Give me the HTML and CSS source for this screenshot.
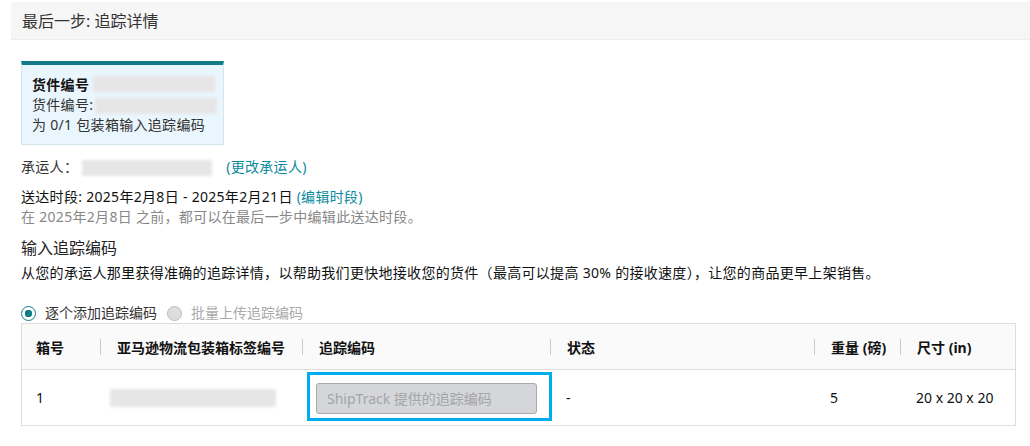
FILE: index.html
```html
<!DOCTYPE html>
<html lang="zh-CN">
<head>
    <meta charset="UTF-8">
    <meta name="viewport" content="width=device-width, initial-scale=1.0">
    <title>追踪详情</title>
    <link rel="stylesheet" href="styles.css">
</head>
<body>
    <div class="page">
        <div class="step-header">最后一步: 追踪详情</div>
        <div class="content">
            <div class="shipment-card">
                <div class="card-line"><b>货件编号</b> <span class="blur blur-card"></span></div>
                <div class="card-line">货件编号:<span class="blur blur-card2"></span></div>
                <div class="card-line">为 0/1 包装箱输入追踪编码</div>
            </div>

            <div class="info-line carrier">承运人：<span class="blur blur-carrier"></span><a href="javascript:;" class="link">(更改承运人)</a></div>
            <div class="info-line delivery">送达时段: 2025年2月8日 - 2025年2月21日 <a href="javascript:;" class="link">(编辑时段)</a></div>
            <div class="info-line muted">在 2025年2月8日 之前，都可以在最后一步中编辑此送达时段。</div>

            <h3 class="section-title">输入追踪编码</h3>
            <p class="desc">从您的承运人那里获得准确的追踪详情，以帮助我们更快地接收您的货件（最高可以提高 30% 的接收速度），让您的商品更早上架销售。</p>

            <div class="radio-group">
                <label class="radio"><span class="radio-dot checked"></span>逐个添加追踪编码</label>
                <label class="radio disabled"><span class="radio-dot"></span>批量上传追踪编码</label>
            </div>

            <div class="box-table">
                <div class="row head">
                    <div class="cell first">箱号</div>
                    <div class="cell"><span class="sep"></span>亚马逊物流包装箱标签编号</div>
                    <div class="cell"><span class="sep"></span>追踪编码</div>
                    <div class="cell"><span class="sep"></span>状态</div>
                    <div class="cell"><span class="sep"></span>重量 (磅)</div>
                    <div class="cell"><span class="sep"></span>尺寸 (in)</div>
                </div>
                <div class="row body">
                    <div class="cell first">1</div>
                    <div class="cell pad"><span class="blur blur-label"></span></div>
                    <div class="cell track">
                        <div class="highlight">
                            <input type="text" class="track-input" placeholder="ShipTrack 提供的追踪编码" disabled>
                        </div>
                    </div>
                    <div class="cell pad">-</div>
                    <div class="cell pad">5</div>
                    <div class="cell pad">20 x 20 x 20</div>
                </div>
            </div>
        </div>
    </div>
</body>
</html>
```

FILE: styles.css
```css
* {
    margin: 0;
    padding: 0;
    box-sizing: border-box;
}
body {
    font-family: "Noto Sans", "Noto Sans CJK SC", sans-serif;
    font-size: 14px;
    color: #0f1111;
    background: #fff;
}
a {
    text-decoration: none;
}
.page {
    padding: 2px 0 0 11px;
}
.step-header {
    height: 38px;
    padding-left: 11px;
    line-height: 38px;
    font-size: 16px;
    color: #333;
    background-color: #f6f6f6;
    border-bottom: 1px solid #eeeeee;
}
.content {
    padding: 0 14px 0 10px;
    letter-spacing: 0.3px;
}
.shipment-card {
    width: 203px;
    margin-top: 21px;
    padding: 10px 10px 9px 10px;
    background-color: #eaf6fd;
    border: 1px solid #d6e4ec;
    border-top: 4px solid #127d87;
}
.card-line {
    line-height: 20px;
    color: #333;
    white-space: nowrap;
}
.card-line b {
    color: #111;
}
.blur {
    display: inline-block;
    vertical-align: middle;
    height: 16px;
    background-color: #e6e6e6;
    filter: blur(1.5px);
}
.blur-card {
    width: 122px;
    margin-top: -4px;
}
.blur-card2 {
    width: 122px;
    margin-left: 2px;
}
.blur-carrier {
    width: 130px;
    margin: 0 14px 0 4px;
}
.blur-label {
    width: 166px;
    height: 18px;
    margin-left: -6px;
}
.info-line {
    line-height: 20px;
}
.carrier {
    margin-top: 12px;
    color: #333;
}
.delivery {
    margin-top: 10px;
}
.muted {
    color: #888;
}
.link {
    color: #0a8aa0;
}
.section-title {
    margin-top: 10px;
    font-size: 16px;
    font-weight: 400;
    line-height: 22px;
    color: #222;
    letter-spacing: 0;
}
.desc {
    margin-top: 4px;
    line-height: 20px;
}
.radio-group {
    display: flex;
    gap: 10px;
    margin-top: 20px;
    line-height: 20px;
    letter-spacing: 0;
}
.radio {
    display: flex;
    align-items: center;
    color: #333;
}
.radio.disabled {
    color: #aaa;
}
.radio-dot {
    width: 15px;
    height: 15px;
    margin-right: 9px;
    border-radius: 50%;
    border: 1px solid #bbbbbb;
    background-color: #dddddd;
}
.radio-dot.checked {
    border: 1px solid #127d87;
    background: radial-gradient(circle, #127d87 0 3.5px, #fff 4px);
}
.box-table {
    border: 1px solid #dddddd;
    letter-spacing: 0;
}
.row {
    display: grid;
    grid-template-columns: 78px 202px 248px 264px 86px 1fr;
}
.row.head {
    height: 46px;
    background-color: #fafafa;
    border-bottom: 1px solid #dddddd;
    font-weight: 700;
    color: #111;
}
.row.body {
    height: 55px;
}
.cell {
    display: flex;
    align-items: center;
    white-space: nowrap;
}
.cell.first {
    padding-left: 14px;
}
.cell.pad {
    padding-left: 16px;
}
.sep {
    width: 1px;
    height: 16px;
    margin-right: 16px;
    background-color: #cccccc;
}
.cell.track {
    align-items: flex-start;
}
.highlight {
    width: 245px;
    height: 49px;
    margin: 2px 0 0 5px;
    padding: 8px 12px 0 6px;
    border: 3px solid #00aeef;
}
.track-input {
    display: block;
    width: 221px;
    height: 31px;
    padding-left: 10px;
    font-family: "Noto Sans", "Noto Sans CJK SC", sans-serif;
    font-size: 14px;
    background-color: #d5d6d9;
    border: 1px solid #a9a9a9;
    border-radius: 3px;
}
.track-input::placeholder {
    color: #a3a5a8;
}
```
